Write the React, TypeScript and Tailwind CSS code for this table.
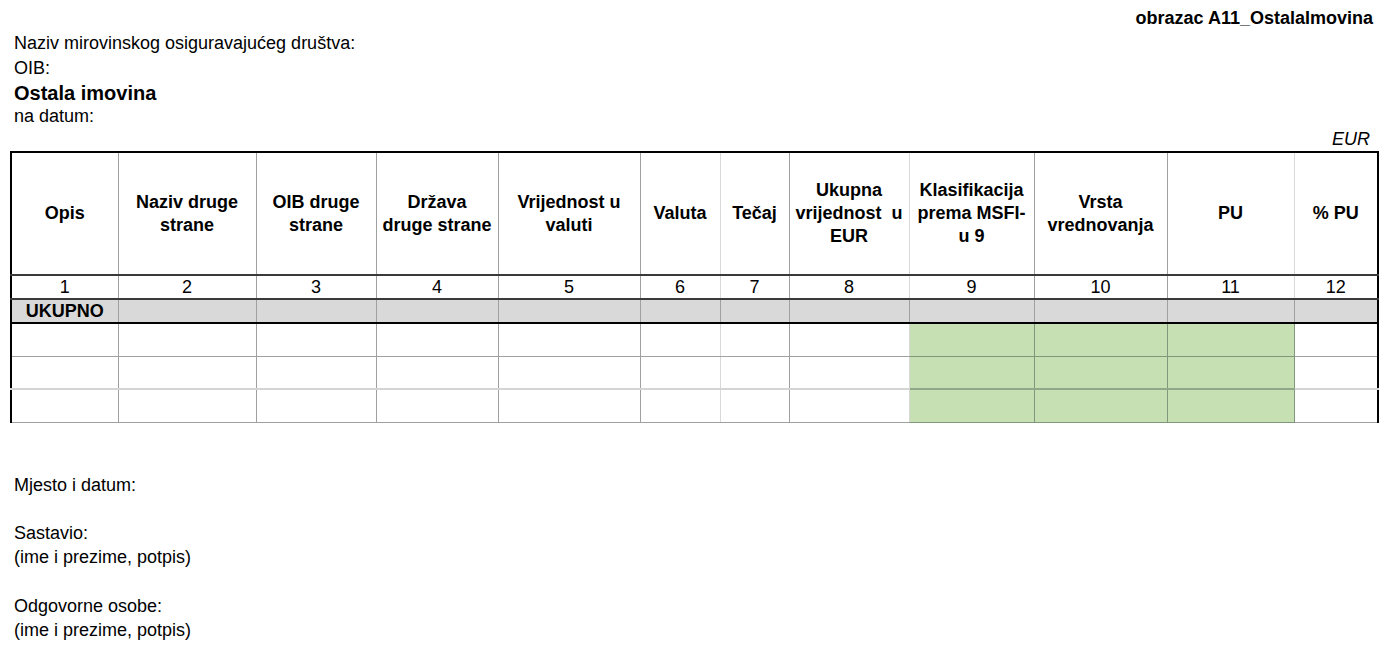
const COLUMNS = [
  { w: "w-[107px]", head: ["Opis"], light: false },
  { w: "w-[138px]", head: ["Naziv druge", "strane"], light: false },
  { w: "w-[120px]", head: ["OIB druge", "strane"], light: false },
  { w: "w-[122px]", head: ["Država", "druge strane"], light: false },
  { w: "w-[142px]", head: ["Vrijednost u", "valuti"], light: false },
  { w: "w-[80px]", head: ["Valuta"], light: true },
  { w: "w-[69px]", head: ["Tečaj"], light: false },
  { w: "w-[120px]", head: ["Ukupna", "vrijednost\u00a0 u", "EUR"], light: true },
  { w: "w-[125px]", head: ["Klasifikacija", "prema MSFI-", "u 9"], light: false },
  { w: "w-[133px]", head: ["Vrsta", "vrednovanja"], light: false },
  { w: "w-[127px]", head: ["PU"], light: true },
  { w: "w-[84px]", head: ["% PU"], light: false },
]

const DATA_ROWS = [0, 1, 2]

// columns 9-11 are the green input fields
const isGreen = (i: number) => i >= 8 && i <= 10

export default function App() {
  const last = COLUMNS.length - 1

  // right border of a cell, by column
  const rightBorder = (i: number) =>
    i === last
      ? "border-r-2 border-r-black"
      : COLUMNS[i].light
        ? "border-r border-r-[#d9d9d9]"
        : "border-r border-r-[#a0a0a0]"

  const leftBorder = (i: number) => (i === 0 ? "border-l-2 border-l-black" : "")

  return (
    <div className="min-h-screen bg-white text-black font-['Liberation_Sans',Arial,sans-serif] text-[18px]">
      {/* Heading block */}
      <div className="pt-[6px] pl-[14px] pr-[13px]">
        <div className="h-[25px] leading-[25px] text-right font-bold">obrazac A11_OstalaImovina</div>
        <div className="h-[25px] leading-[25px]">Naziv mirovinskog osiguravajućeg društva:</div>
        <div className="h-[25px] leading-[25px]">OIB:</div>
        <div className="h-[24px] leading-[24px] text-[20px] font-bold">Ostala imovina</div>
        <div className="h-[23px] leading-[23px]">na datum:</div>
        <div className="h-[22px] leading-[22px] text-right italic pr-[3px]">EUR</div>
      </div>

      {/* Table */}
      <table className="mt-[1px] ml-[10px] w-[1368px] table-fixed border-collapse">
        <colgroup>
          {COLUMNS.map((c, i) => (
            <col key={i} className={c.w} />
          ))}
        </colgroup>
        <tbody>
          <tr>
            {COLUMNS.map((c, i) => (
              <td
                key={i}
                className={`h-[123px] p-0 text-center align-middle font-bold leading-[23px] border-t-2 border-t-black border-b-2 border-b-[#3a3a3a] ${leftBorder(i)} ${rightBorder(i)}`}
              >
                {c.head.map((line, j) => (
                  <div key={j} className="whitespace-pre">
                    {line}
                  </div>
                ))}
              </td>
            ))}
          </tr>
          <tr>
            {COLUMNS.map((_, i) => (
              <td
                key={i}
                className={`h-[23px] p-0 text-center align-middle leading-[22px] border-b-2 border-b-[#3a3a3a] ${leftBorder(i)} ${rightBorder(i)}`}
              >
                {i + 1}
              </td>
            ))}
          </tr>
          <tr className="bg-[#d9d9d9]">
            {COLUMNS.map((_, i) => (
              <td
                key={i}
                className={`h-[24px] p-0 text-center align-middle font-bold leading-[22px] border-b-2 border-b-black ${leftBorder(i)} ${
                  i === last ? "border-r-2 border-r-black" : "border-r border-r-[#a0a0a0]"
                }`}
              >
                {i === 0 ? "UKUPNO" : ""}
              </td>
            ))}
          </tr>
          {DATA_ROWS.map((r) => (
            <tr key={r}>
              {COLUMNS.map((_, i) => (
                <td
                  key={i}
                  className={`h-[33px] p-0 ${leftBorder(i)} ${
                    isGreen(i) ? "bg-[#c6e0b4] border-r border-r-[#7f977a]" : rightBorder(i)
                  } ${
                    r === 1
                      ? isGreen(i)
                        ? "border-b-2 border-b-[#8ea889]"
                        : "border-b-2 border-b-[#d4d4d4]"
                      : isGreen(i)
                        ? "border-b border-b-[#7f977a]"
                        : "border-b border-b-[#a0a0a0]"
                  }`}
                />
              ))}
            </tr>
          ))}
        </tbody>
      </table>

      {/* Signatures */}
      <div className="mt-[50px] pl-[14px] leading-[24px]">
        <div>Mjesto i datum:</div>
        <div className="mt-[24px]">Sastavio:</div>
        <div>(ime i prezime, potpis)</div>
        <div className="mt-[25px]">Odgovorne osobe:</div>
        <div>(ime i prezime, potpis)</div>
      </div>
    </div>
  )
}
